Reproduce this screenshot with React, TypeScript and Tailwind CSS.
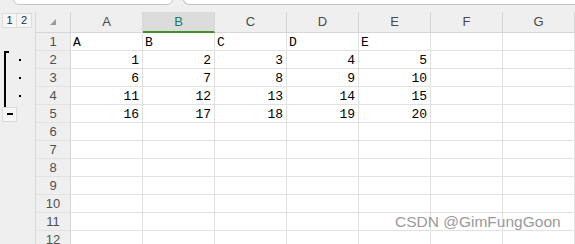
import React from "react";

const cols = ["A", "B", "C", "D", "E", "F", "G"];

const data: Record<number, (string | number)[]> = {
  1: ["A", "B", "C", "D", "E"],
  2: [1, 2, 3, 4, 5],
  3: [6, 7, 8, 9, 10],
  4: [11, 12, 13, 14, 15],
  5: [16, 17, 18, 19, 20],
};

const rows = [1, 2, 3, 4, 5, 6, 7, 8, 9, 10, 11, 12];

export default function App() {
  return (
    <main className="relative w-[575px] h-[244px] overflow-hidden bg-white font-['Liberation_Sans',Arial,sans-serif]">

      {/* TOP STRIP (formula bar edges) */}
      <div className="h-[12px] bg-[#efefef] overflow-hidden flex pl-[13px] gap-[10px]">
        <div className="w-[160px] h-[16px] -mt-[11px] bg-white border border-[#c4c4c4] rounded-b-[6px]" />
        <div className="flex-1 h-[16px] -mt-[11px] bg-white border border-[#c4c4c4] rounded-bl-[6px] border-r-0" />
      </div>

      <div className="flex">

        {/* OUTLINE COLUMN */}
        <div className="w-[35px] bg-[#efefef] flex flex-col shrink-0 h-[232px]">
          <div className="h-[21px] flex items-start pt-[1px] pl-[2px]">
            <div className="w-[15px] h-[15px] border border-[#dcdcdc] bg-[#f6f6f6] text-[11px] leading-[13px] text-center text-[#1c2a4a]">1</div>
            <div className="w-[15px] h-[15px] border border-[#dcdcdc] border-l-0 bg-[#f6f6f6] text-[11px] leading-[13px] text-center text-[#1c2a4a]">2</div>
          </div>
          <div className="h-[18px]" />
          <div className="h-[56px] flex pl-[4px] -mb-[2px]">
            <div className="w-[5px] border-l-2 border-t-2 border-black" />
            <div className="flex flex-col ml-[10px]">
              {[0, 1, 2].map(i => (
                <div key={i} className="h-[18px] flex items-center">
                  <div className="w-[2px] h-[2px] bg-black" />
                </div>
              ))}
            </div>
          </div>
          <div className="h-[18px] flex items-center pl-[2px]">
            <div className="w-[15px] h-[15px] border border-[#dcdcdc] bg-[#f6f6f6] flex items-center justify-center">
              <div className="w-[6px] h-[2px] bg-black" />
            </div>
          </div>
        </div>

        {/* SHEET */}
        <div className="flex-1 flex flex-col">

          {/* COLUMN HEADERS */}
          <div className="flex h-[21px]">
            <div className="w-[36px] shrink-0 bg-[#efefef] border-l border-r border-b border-[#d6d6d6] relative flex items-end justify-end pr-[14px] pb-[7px]">
              <svg width="6" height="6" viewBox="0 0 6 6">
                <polygon points="6,0 6,6 0,6" fill="#9a9a9a" />
              </svg>
            </div>
            {cols.map(c => (
              <div
                key={c}
                className={
                  c === "B"
                    ? "w-[72px] shrink-0 bg-[#dcdcdc] border-r border-[#d6d6d6] border-b-2 border-b-[#3f8f2f] text-[#1a7d67] text-[13px] flex items-center justify-center"
                    : "w-[72px] shrink-0 bg-[#efefef] border-r border-b border-[#d6d6d6] text-[#4a4a4a] text-[13px] flex items-center justify-center"
                }
              >
                {c}
              </div>
            ))}
          </div>

          {/* ROWS */}
          {rows.map(r => (
            <div key={r} className="flex h-[18px]">
              <div className="w-[36px] shrink-0 bg-[#efefef] border-l border-r border-b border-l-[#d6d6d6] border-r-[#d6d6d6] border-b-[#e2e2e2] text-[13px] text-[#505050] flex items-center justify-center">
                {r}
              </div>
              {cols.map((c, i) => {
                const v = data[r]?.[i];
                const isText = typeof v === "string";
                return (
                  <div
                    key={c}
                    className={
                      "w-[72px] shrink-0 border-r border-b border-[#e1e1e1] font-['Liberation_Mono',monospace] text-[13px] leading-[17px] text-black pt-[1px] " +
                      (isText ? "text-left pl-[2px]" : "text-right pr-[3px]")
                    }
                  >
                    {v ?? ""}
                  </div>
                );
              })}
            </div>
          ))}

        </div>
      </div>

      {/* WATERMARK */}
      <div className="absolute left-[395px] top-[214px] text-[15.5px] leading-none text-[#9a9a9a] font-['Liberation_Sans',Arial,sans-serif]">
        CSDN @GimFungGoon
      </div>

    </main>
  );
}
